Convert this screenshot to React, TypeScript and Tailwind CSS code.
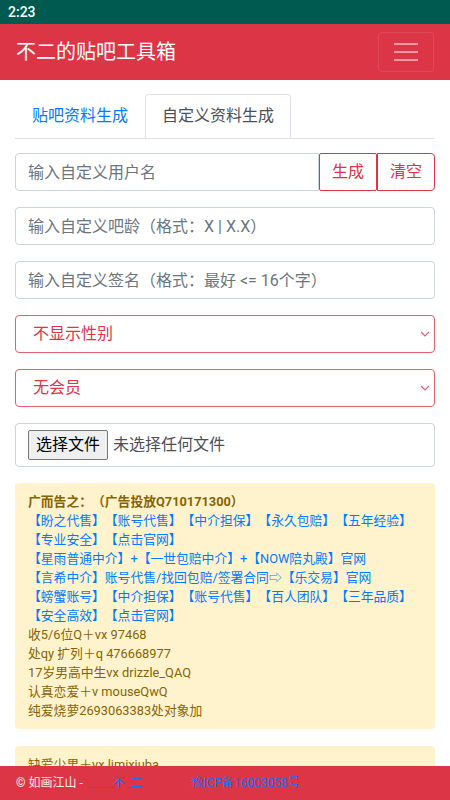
import React from "react";

const font = { fontFamily: 'Roboto, "Noto Sans CJK SC", sans-serif' };

function Chevron() {
  return (
    <svg width="10" height="6" viewBox="0 0 10 6" className="shrink-0">
      <path d="M1 1l4 4 4-4" fill="none" stroke="#e4606d" strokeWidth="1.2" />
    </svg>
  );
}

export default function App() {
  const links = [
    "【盼之代售】【账号代售】【中介担保】【永久包赔】【五年经验】",
    "【专业安全】【点击官网】",
    "【星雨普通中介】+【一世包赔中介】+【NOW陪丸殿】官网",
    "【言希中介】账号代售/找回包赔/签署合同⇨【乐交易】官网",
    "【螃蟹账号】【中介担保】【账号代售】【百人团队】【三年品质】",
    "【安全高效】【点击官网】",
  ];
  const plain = [
    "收5/6位Q＋vx 97468",
    "处qy 扩列＋q 476668977",
    "17岁男高中生vx drizzle_QAQ",
    "认真恋爱＋v mouseQwQ",
    "纯爱烧萝2693063383处对象加",
  ];
  return (
    <div className="min-h-screen bg-white [text-spacing-trim:space-all]" style={font}>
      <div className="h-6 bg-[#005a4f] flex items-center pl-2 text-white text-[14px] font-medium">
        2:23
      </div>
      <header className="h-14 bg-[#dc3545] flex items-center justify-between pl-4 pr-4">
        <div className="text-white text-[20px] leading-none">不二的贴吧工具箱</div>
        <div className="w-[56px] h-[40px] border border-white/10 rounded flex flex-col items-center justify-center gap-[6px]">
          <span className="block w-6 h-[2px] bg-white/50" />
          <span className="block w-6 h-[2px] bg-white/50" />
          <span className="block w-6 h-[2px] bg-white/50" />
        </div>
      </header>

      <main className="px-[15px] pb-10">
        <div className="mt-[14px] flex border-b border-[#dee2e6]">
          <div className="h-[44px] px-4 flex items-center border border-transparent text-[16px] text-[#007bff]">
            贴吧资料生成
          </div>
          <div className="h-[44px] -mb-px px-4 flex items-center border border-[#dee2e6] border-b-white rounded-t bg-white text-[16px] text-[#495057]">
            自定义资料生成
          </div>
        </div>

        <div className="mt-[14px] flex h-[38px]">
          <input
            className="flex-1 min-w-0 h-full border border-[#ced4da] rounded-l px-3 text-[16px] text-[#495057] placeholder:text-[#6c757d] outline-none [text-spacing-trim:space-all]"
            placeholder="输入自定义用户名"
            style={font}
          />
          <button className="h-full w-[58px] border border-[#dc3545] text-[#dc3545] text-[16px] rounded-[2px]">
            生成
          </button>
          <button className="h-full w-[58px] border border-[#dc3545] text-[#dc3545] text-[16px] rounded-r">
            清空
          </button>
        </div>

        <input
          className="mt-4 block w-full h-[38px] border border-[#ced4da] rounded px-3 text-[16px] placeholder:text-[#6c757d] outline-none [text-spacing-trim:space-all]"
          placeholder="输入自定义吧龄（格式：X | X.X）"
          style={font}
        />
        <input
          className="mt-4 block w-full h-[38px] border border-[#ced4da] rounded px-3 text-[16px] placeholder:text-[#6c757d] outline-none [text-spacing-trim:space-all]"
          placeholder="输入自定义签名（格式：最好 <= 16个字）"
          style={font}
        />

        <div className="mt-4 h-[38px] border border-[#e4606d] rounded flex items-center justify-between pl-[17px] pr-[4px] text-[16px] text-[#dc3545]">
          <span>不显示性别</span>
          <Chevron />
        </div>
        <div className="mt-4 h-[38px] border border-[#e4606d] rounded flex items-center justify-between pl-[17px] pr-[4px] text-[16px] text-[#dc3545]">
          <span>无会员</span>
          <Chevron />
        </div>

        <div className="mt-4 h-[44px] border border-[#ced4da] rounded flex items-center px-3">
          <span className="h-[30px] px-[7px] flex items-center bg-[#efefef] border border-[#767676] rounded-[2px] text-[16px] text-black">
            选择文件
          </span>
          <span className="ml-[5px] text-[16px] text-[#495057]">未选择任何文件</span>
        </div>

        <div className="mt-4 bg-[#fff3cd] rounded pt-[9px] pb-[9px] px-[13px] text-[12.8px] leading-[19px] text-[#856404]">
          <div className="font-bold whitespace-nowrap">广而告之：（广告投放Q710171300）</div>
          {links.map((l) => (
            <div key={l} className="text-[#007bff] whitespace-nowrap">
              {l}
            </div>
          ))}
          {plain.map((l) => (
            <div key={l} className="whitespace-nowrap">
              {l}
            </div>
          ))}
        </div>

        <div className="mt-[17px] bg-[#fff3cd] rounded pt-[9px] pb-[9px] px-[13px] text-[12.8px] leading-[19px] text-[#856404]">
          <div className="whitespace-nowrap">缺爱少男＋vx limixiuba</div>
          <div className="whitespace-nowrap">&nbsp;</div>
        </div>
      </main>

      <footer className="fixed bottom-0 left-0 right-0 h-[34px] bg-[#dc3545] flex items-center px-4 text-[12px] whitespace-nowrap">
        <span className="text-white/90 whitespace-pre">© 如画江山 - </span>
        <span className="text-[#1a6ff0]">_____不_二</span>
        <span className="text-[#1a6ff0] ml-[49px]">豫ICP备16003058号</span>
      </footer>
    </div>
  );
}
